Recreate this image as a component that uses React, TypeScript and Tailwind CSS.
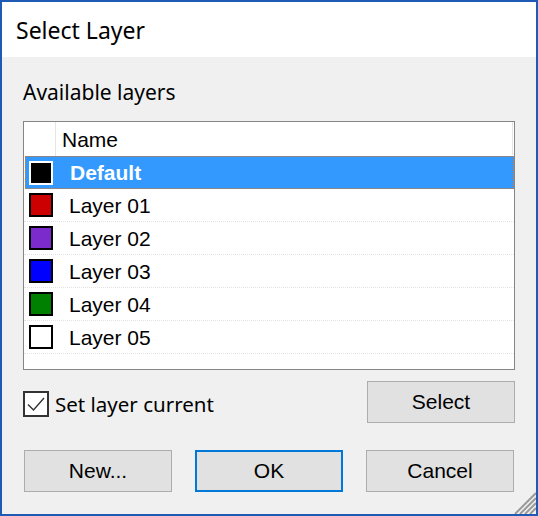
import React from "react";

const layers = [
  { name: "Default", color: "#000000", selected: true },
  { name: "Layer 01", color: "#cc0000" },
  { name: "Layer 02", color: "#7b2bcc" },
  { name: "Layer 03", color: "#0000ff" },
  { name: "Layer 04", color: "#008000" },
  { name: "Layer 05", color: "#ffffff" },
];

const seg = { fontFamily: '"Noto Sans", "Open Sans", sans-serif' };
const arial = { fontFamily: '"Liberation Sans", Arial, sans-serif' };

function Btn({ label, primary }: { label: string; primary?: boolean }) {
  return (
    <div
      className={
        "w-[148px] h-[42px] flex items-center justify-center bg-[#e1e1e1] text-[21px] text-black " +
        (primary ? "border-2 border-[#0078d7]" : "border border-[#adadad]")
      }
      style={arial}
    >
      {label}
    </div>
  );
}

export default function App() {
  return (
    <div className="relative w-[538px] h-[516px] border-2 border-[#1f5bb5] flex flex-col bg-[#f0f0f0] overflow-hidden">
      <div className="h-[55px] bg-white flex items-center pl-[14px] pt-[2px]">
        <span className="text-[23px] text-black leading-none" style={seg}>
          Select Layer
        </span>
      </div>
      <div className="flex-1 flex flex-col pl-[21px] pr-[21px] pt-[21px]">
        <div className="h-[28px] leading-[28px] text-[21px] text-black" style={seg}>
          Available layers
        </div>
        <div className="mt-[15px] h-[249px] border border-[#858585] bg-white flex flex-col">
          <div className="h-[34px] flex items-stretch">
            <div className="w-[32px] border-r border-[#e5e5e5]" />
            <div className="flex-1 flex items-center pl-[6px] pt-[1px] text-[21px] text-black" style={arial}>
              Name
            </div>
            <div className="w-[1px] bg-[#e5e5e5] mr-[1px] mb-[1px]" />
          </div>
          {layers.map((l) =>
            l.selected ? (
              <div
                key={l.name}
                className="h-[33px] ml-[1px] flex items-center bg-[#3399ff] border border-dotted border-[#e0761a]"
              >
                <div
                  className="ml-[3px] w-[24px] h-[24px] border-2 border-white"
                  style={{ backgroundColor: l.color }}
                />
                <div className="ml-[17px] text-[21px] font-bold text-white" style={arial}>
                  {l.name}
                </div>
              </div>
            ) : (
              <div
                key={l.name}
                className="h-[33px] flex items-center border-b border-dotted border-[#e3e3e3]"
              >
                <div
                  className="ml-[5px] w-[24px] h-[24px] border-2 border-black"
                  style={{ backgroundColor: l.color }}
                />
                <div className="ml-[16px] pt-[1px] text-[21px] text-black" style={arial}>
                  {l.name}
                </div>
              </div>
            )
          )}
        </div>
        <div className="mt-[11px] flex items-center justify-between">
          <div className="flex items-center mt-[4px]">
            <div className="w-[26px] h-[26px] border-2 border-[#333333] bg-white flex items-center justify-center">
              <svg width="20" height="20" viewBox="0 0 20 20">
                <path d="M2 10.5 L7.5 16 L18 4" fill="none" stroke="#333" strokeWidth="1.4" />
              </svg>
            </div>
            <span className="ml-[6px] text-[20.5px] text-black" style={seg}>
              Set layer current
            </span>
          </div>
          <Btn label="Select" />
        </div>
        <div className="mt-[27px] ml-[1px] flex items-center gap-[23px]">
          <Btn label="New..." />
          <Btn label="OK" primary />
          <Btn label="Cancel" />
        </div>
      </div>
      <svg
        className="absolute right-0 bottom-0"
        width="22"
        height="22"
        viewBox="0 0 22 22"
      >
        <path d="M22 1 L1 22 M22 6 L6 22 M22 11 L11 22 M22 16 L16 22" stroke="#9a9a9a" strokeWidth="2" />
      </svg>
    </div>
  );
}
